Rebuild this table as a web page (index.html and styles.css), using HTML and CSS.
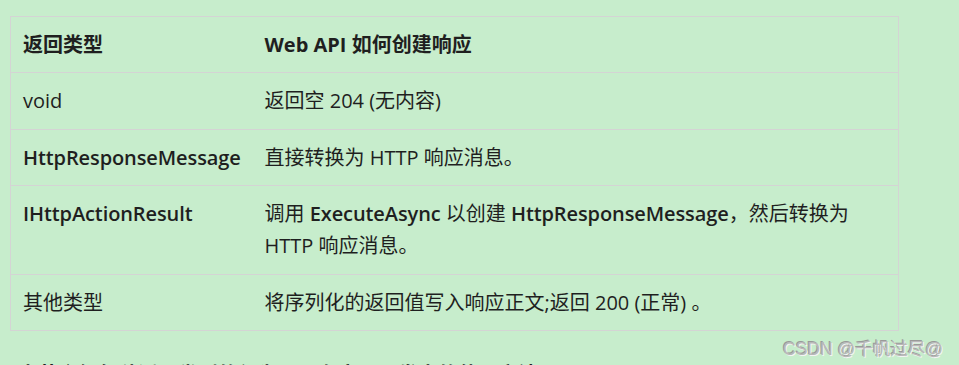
FILE: index.html
```html
<!DOCTYPE html>
<html lang="zh-CN">
<head>
<meta charset="utf-8">
<title>返回类型</title>
<link rel="stylesheet" href="styles.css">
</head>
<body>
<div class="page">
  <table class="types">
    <colgroup><col class="col1"><col></colgroup>
    <thead>
      <tr><th>返回类型</th><th>Web API 如何创建响应</th></tr>
    </thead>
    <tbody>
      <tr><td>void</td><td>返回空 204 (无内容)</td></tr>
      <tr><td><strong>HttpResponseMessage</strong></td><td>直接转换为 HTTP 响应消息。</td></tr>
      <tr><td><strong>IHttpActionResult</strong></td><td>调用 <strong>ExecuteAsync</strong> 以创建 <strong>HttpResponseMessage</strong>，然后转换为 HTTP 响应消息。</td></tr>
      <tr><td>其他类型</td><td>将序列化的返回值写入响应正文;返回 200 (正常) 。</td></tr>
    </tbody>
  </table>
  <p class="after">本节介绍每种返回类型的行为以及在实际开发中的使用方法。</p>
  <div class="watermark">CSDN @千帆过尽@</div>
</div>
</body>
</html>
```
FILE: styles.css
```css
html, body {
  margin: 0;
  padding: 0;
  background: #c7edcc;
  height: 100%;
  overflow: hidden;
}
.page {
  position: relative;
  height: 365px;
  padding: 16px 0 0 10px;
  box-sizing: border-box;
  font-family: "Open Sans", "Noto Sans CJK SC", sans-serif;
  font-size: 20px;
  color: #1f1f1f;
}
.types {
  border-collapse: collapse;
  table-layout: fixed;
  width: 889px;
  border: 1px solid #d4d4d4;
}
.types .col1 { width: 242px; }
.types th, .types td {
  text-align: left;
  vertical-align: top;
  padding: 12px 12px 11.4px;
  line-height: 32px;
  border-top: 1px solid #d4d4d4;
  white-space: normal;
}
.types th { font-weight: 700; }
.types strong { font-weight: 600; letter-spacing: -0.1px; }
.after {
  margin: 28px 0 0 8px;
  font-size: 20px;
  font-weight: 700;
  line-height: 32px;
  white-space: nowrap;
}
.watermark {
  position: absolute;
  right: 16px;
  top: 335px;
  font-family: "Liberation Sans", "Noto Sans CJK SC", sans-serif;
  font-size: 17.5px;
  color: #b8b8b8;
  text-shadow: 1px 1px 0 #f4f4f4, -1px -1px 0 #9a9a9a;
}
```
